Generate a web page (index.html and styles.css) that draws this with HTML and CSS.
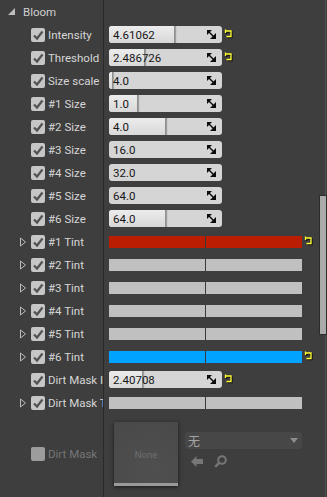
FILE: index.html
```html
<!DOCTYPE html>
<html lang="en">
<head>
    <meta charset="UTF-8">
    <title>Bloom</title>
    <link rel="stylesheet" href="styles.css">
</head>
<body>
    <div class="panel">
        <div class="row head">
            <div class="name">
                <svg class="collapse" width="7" height="7" viewBox="0 0 7 7"><polygon points="7,0 7,7 0,7" fill="#bdbdbd"/></svg>
                <span class="title">Bloom</span>
            </div>
            <div class="value"></div>
        </div>

        <div class="row">
            <div class="name"><span class="exp"></span><span class="cb"><svg viewBox="0 0 14 14"><path d="M3 7.5 L6 10.5 L11.5 3.5"/></svg></span><span class="label">Intensity</span></div>
            <div class="value"><div class="field"><span class="fill" style="width:65px"></span><span class="num">4.61062</span><svg class="spin" viewBox="0 0 9 9"><polygon points="0,0 5,0 0,5"/><polygon points="9,3 9,9 3,9"/><polygon points="1,2 2,1 8,7 7,8"/></svg></div><svg class="reset" viewBox="0 0 9 9"><path d="M1.5 0.5 V4 M1.5 2 H7 V7.5 H2.5"/></svg></div>
        </div>
        <div class="row">
            <div class="name"><span class="exp"></span><span class="cb"><svg viewBox="0 0 14 14"><path d="M3 7.5 L6 10.5 L11.5 3.5"/></svg></span><span class="label">Threshold</span></div>
            <div class="value"><div class="field"><span class="fill" style="width:35px"></span><span class="num">2.486726</span><svg class="spin" viewBox="0 0 9 9"><polygon points="0,0 5,0 0,5"/><polygon points="9,3 9,9 3,9"/><polygon points="1,2 2,1 8,7 7,8"/></svg></div><svg class="reset" viewBox="0 0 9 9"><path d="M1.5 0.5 V4 M1.5 2 H7 V7.5 H2.5"/></svg></div>
        </div>
        <div class="row">
            <div class="name"><span class="exp"></span><span class="cb"><svg viewBox="0 0 14 14"><path d="M3 7.5 L6 10.5 L11.5 3.5"/></svg></span><span class="label">Size scale</span></div>
            <div class="value"><div class="field"><span class="fill" style="width:3px"></span><span class="num">4.0</span><svg class="spin" viewBox="0 0 9 9"><polygon points="0,0 5,0 0,5"/><polygon points="9,3 9,9 3,9"/><polygon points="1,2 2,1 8,7 7,8"/></svg></div></div>
        </div>
        <div class="row">
            <div class="name"><span class="exp"></span><span class="cb"><svg viewBox="0 0 14 14"><path d="M3 7.5 L6 10.5 L11.5 3.5"/></svg></span><span class="label">#1 Size</span></div>
            <div class="value"><div class="field"><span class="fill" style="width:28px"></span><span class="num">1.0</span><svg class="spin" viewBox="0 0 9 9"><polygon points="0,0 5,0 0,5"/><polygon points="9,3 9,9 3,9"/><polygon points="1,2 2,1 8,7 7,8"/></svg></div></div>
        </div>
        <div class="row">
            <div class="name"><span class="exp"></span><span class="cb"><svg viewBox="0 0 14 14"><path d="M3 7.5 L6 10.5 L11.5 3.5"/></svg></span><span class="label">#2 Size</span></div>
            <div class="value"><div class="field"><span class="fill" style="width:56px"></span><span class="num">4.0</span><svg class="spin" viewBox="0 0 9 9"><polygon points="0,0 5,0 0,5"/><polygon points="9,3 9,9 3,9"/><polygon points="1,2 2,1 8,7 7,8"/></svg></div></div>
        </div>
        <div class="row">
            <div class="name"><span class="exp"></span><span class="cb"><svg viewBox="0 0 14 14"><path d="M3 7.5 L6 10.5 L11.5 3.5"/></svg></span><span class="label">#3 Size</span></div>
            <div class="value"><div class="field"><span class="num">16.0</span><svg class="spin" viewBox="0 0 9 9"><polygon points="0,0 5,0 0,5"/><polygon points="9,3 9,9 3,9"/><polygon points="1,2 2,1 8,7 7,8"/></svg></div></div>
        </div>
        <div class="row">
            <div class="name"><span class="exp"></span><span class="cb"><svg viewBox="0 0 14 14"><path d="M3 7.5 L6 10.5 L11.5 3.5"/></svg></span><span class="label">#4 Size</span></div>
            <div class="value"><div class="field"><span class="num">32.0</span><svg class="spin" viewBox="0 0 9 9"><polygon points="0,0 5,0 0,5"/><polygon points="9,3 9,9 3,9"/><polygon points="1,2 2,1 8,7 7,8"/></svg></div></div>
        </div>
        <div class="row">
            <div class="name"><span class="exp"></span><span class="cb"><svg viewBox="0 0 14 14"><path d="M3 7.5 L6 10.5 L11.5 3.5"/></svg></span><span class="label">#5 Size</span></div>
            <div class="value"><div class="field"><span class="num">64.0</span><svg class="spin" viewBox="0 0 9 9"><polygon points="0,0 5,0 0,5"/><polygon points="9,3 9,9 3,9"/><polygon points="1,2 2,1 8,7 7,8"/></svg></div></div>
        </div>
        <div class="row">
            <div class="name"><span class="exp"></span><span class="cb"><svg viewBox="0 0 14 14"><path d="M3 7.5 L6 10.5 L11.5 3.5"/></svg></span><span class="label">#6 Size</span></div>
            <div class="value"><div class="field"><span class="fill" style="width:56px"></span><span class="num">64.0</span><svg class="spin" viewBox="0 0 9 9"><polygon points="0,0 5,0 0,5"/><polygon points="9,3 9,9 3,9"/><polygon points="1,2 2,1 8,7 7,8"/></svg></div></div>
        </div>

        <div class="row">
            <div class="name"><svg class="exp" viewBox="0 0 12 10"><polygon points="1.5,1 6.5,5 1.5,9"/></svg><span class="cb"><svg viewBox="0 0 14 14"><path d="M3 7.5 L6 10.5 L11.5 3.5"/></svg></span><span class="label">#1 Tint</span></div>
            <div class="value"><div class="color red"></div><svg class="reset" viewBox="0 0 9 9"><path d="M1.5 0.5 V4 M1.5 2 H7 V7.5 H2.5"/></svg></div>
        </div>
        <div class="row">
            <div class="name"><svg class="exp" viewBox="0 0 12 10"><polygon points="1.5,1 6.5,5 1.5,9"/></svg><span class="cb"><svg viewBox="0 0 14 14"><path d="M3 7.5 L6 10.5 L11.5 3.5"/></svg></span><span class="label">#2 Tint</span></div>
            <div class="value"><div class="color"></div></div>
        </div>
        <div class="row">
            <div class="name"><svg class="exp" viewBox="0 0 12 10"><polygon points="1.5,1 6.5,5 1.5,9"/></svg><span class="cb"><svg viewBox="0 0 14 14"><path d="M3 7.5 L6 10.5 L11.5 3.5"/></svg></span><span class="label">#3 Tint</span></div>
            <div class="value"><div class="color"></div></div>
        </div>
        <div class="row">
            <div class="name"><svg class="exp" viewBox="0 0 12 10"><polygon points="1.5,1 6.5,5 1.5,9"/></svg><span class="cb"><svg viewBox="0 0 14 14"><path d="M3 7.5 L6 10.5 L11.5 3.5"/></svg></span><span class="label">#4 Tint</span></div>
            <div class="value"><div class="color"></div></div>
        </div>
        <div class="row">
            <div class="name"><svg class="exp" viewBox="0 0 12 10"><polygon points="1.5,1 6.5,5 1.5,9"/></svg><span class="cb"><svg viewBox="0 0 14 14"><path d="M3 7.5 L6 10.5 L11.5 3.5"/></svg></span><span class="label">#5 Tint</span></div>
            <div class="value"><div class="color"></div></div>
        </div>
        <div class="row">
            <div class="name"><svg class="exp" viewBox="0 0 12 10"><polygon points="1.5,1 6.5,5 1.5,9"/></svg><span class="cb"><svg viewBox="0 0 14 14"><path d="M3 7.5 L6 10.5 L11.5 3.5"/></svg></span><span class="label">#6 Tint</span></div>
            <div class="value"><div class="color blue"></div><svg class="reset" viewBox="0 0 9 9"><path d="M1.5 0.5 V4 M1.5 2 H7 V7.5 H2.5"/></svg></div>
        </div>

        <div class="row">
            <div class="name"><span class="exp"></span><span class="cb"><svg viewBox="0 0 14 14"><path d="M3 7.5 L6 10.5 L11.5 3.5"/></svg></span><span class="label">Dirt Mask Intensity</span></div>
            <div class="value"><div class="field"><span class="fill" style="width:33px"></span><span class="num">2.40708</span><svg class="spin" viewBox="0 0 9 9"><polygon points="0,0 5,0 0,5"/><polygon points="9,3 9,9 3,9"/><polygon points="1,2 2,1 8,7 7,8"/></svg></div><svg class="reset" viewBox="0 0 9 9"><path d="M1.5 0.5 V4 M1.5 2 H7 V7.5 H2.5"/></svg></div>
        </div>
        <div class="row">
            <div class="name"><svg class="exp" viewBox="0 0 12 10"><polygon points="1.5,1 6.5,5 1.5,9"/></svg><span class="cb"><svg viewBox="0 0 14 14"><path d="M3 7.5 L6 10.5 L11.5 3.5"/></svg></span><span class="label">Dirt Mask Tint</span></div>
            <div class="value"><div class="color"></div></div>
        </div>

        <div class="row asset">
            <div class="name"><span class="exp"></span><span class="cb off"></span><span class="label dim">Dirt Mask</span></div>
            <div class="value">
                <div class="thumb"><span>None</span></div>
                <div class="picker">
                    <div class="combo"><span>无</span><svg width="8" height="5" viewBox="0 0 8 5"><polygon points="0,0 8,0 4,5" fill="#8c8c8c"/></svg></div>
                    <div class="tools">
                        <svg width="12" height="11" viewBox="0 0 12 11"><polygon points="0,5.5 5.5,0 5.5,3 12,3 12,8 5.5,8 5.5,11" fill="#767676"/></svg>
                        <svg width="13" height="13" viewBox="0 0 13 13"><circle cx="8" cy="5" r="3.8" fill="none" stroke="#767676" stroke-width="2"/><path d="M5.3 7.7 L1.2 11.8" stroke="#767676" stroke-width="2.4"/></svg>
                    </div>
                </div>
            </div>
        </div>

        <div class="scrollbar"><div class="thumbbar"></div></div>
    </div>
</body>
</html>
```

FILE: styles.css
```css
body {
    margin: 0;
    background: #3e3e3e;
    font-family: Roboto, "Noto Sans CJK SC", sans-serif;
    font-size: 11px;
}
.panel {
    position: relative;
    width: 327px;
    height: 497px;
    background: #3e3e3e;
    overflow: hidden;
}
.row {
    display: flex;
    height: 23px;
}
.name {
    width: 104px;
    flex: none;
    display: flex;
    align-items: center;
    padding-left: 19px;
    box-sizing: border-box;
    border-right: 1px solid #2a2a2a;
    overflow: hidden;
    white-space: nowrap;
}
.head .name {
    padding-left: 8px;
}
.collapse {
    margin-right: 8px;
    margin-top: -1px;
}
.title {
    color: #cfcfcf;
    font-size: 11.5px;
}
.exp {
    width: 12px;
    height: 10px;
    flex: none;
}
svg.exp polygon {
    fill: none;
    stroke: #bcbcbc;
    stroke-width: 1;
}
.cb {
    width: 14px;
    height: 14px;
    flex: none;
    background: #c6c6c6;
    border-radius: 2px;
    display: flex;
}
.cb svg {
    width: 14px;
    height: 14px;
}
.cb path {
    fill: none;
    stroke: #525252;
    stroke-width: 2.2;
}
.cb.off {
    background: #9c9c9c;
}
.label {
    margin-left: 3px;
    color: #d6d6d6;
    font-size: 11.5px;
}
.label.dim {
    color: #767676;
}
.value {
    flex: 1;
    display: flex;
    align-items: center;
    padding-left: 5px;
}
.field {
    position: relative;
    width: 113px;
    height: 17px;
    background: #d5d5d5;
    border-radius: 3px;
    overflow: hidden;
    display: flex;
    align-items: center;
}
.fill {
    position: absolute;
    left: 0;
    top: 0;
    bottom: 0;
    background: linear-gradient(#ececec, #d8d8d8);
    border-right: 1px solid #8f8f8f;
    box-shadow: 1px 0 1px rgba(0,0,0,0.25);
}
.num {
    position: relative;
    padding-left: 4px;
    color: #161616;
    font-size: 11.5px;
    flex: 1;
}
.spin {
    position: relative;
    width: 9px;
    height: 9px;
    margin-right: 6px;
    fill: #0c0c0c;
}
.reset {
    width: 9px;
    height: 9px;
    margin-left: 2px;
    margin-top: -2px;
    filter: drop-shadow(1px 1px 0 #111);
}
.reset path {
    fill: none;
    stroke: #ffff33;
    stroke-width: 1.3;
}
.color {
    width: 193px;
    height: 12px;
    background: linear-gradient(to right, transparent 96px, #3a3a3a 96px, #3a3a3a 97px, transparent 97px), #c0c0c0;
}
.color.red {
    background-color: #bb1d00;
}
.color.blue {
    background-color: #00a3ff;
}
.row.asset {
    height: 83px;
}
.asset .name {
    padding-bottom: 3px;
}
.asset .value {
    padding-left: 10px;
    align-items: flex-start;
    padding-top: 8px;
}
.thumb {
    width: 64px;
    height: 64px;
    box-sizing: border-box;
    background: radial-gradient(circle at 60% 80%, #4f4f4f, #494949);
    border-bottom: 3px solid #9a9a9a;
    box-shadow: 0 1px 4px rgba(0,0,0,0.6);
    display: flex;
    align-items: center;
    justify-content: center;
}
.thumb span {
    color: #6f6f6f;
    font-size: 9.5px;
    margin-top: 3px;
}
.picker {
    margin-left: 7px;
    padding-top: 10px;
}
.combo {
    width: 117px;
    height: 17px;
    box-sizing: border-box;
    background: #474747;
    border-radius: 3px;
    display: flex;
    align-items: center;
    justify-content: space-between;
    padding: 0 4px 0 3px;
    color: #a3a3a3;
    font-size: 12px;
}
.tools {
    display: flex;
    align-items: center;
    gap: 11px;
    padding: 6px 0 0 6px;
}
.scrollbar {
    position: absolute;
    right: 0;
    top: 0;
    bottom: 0;
    width: 8px;
}
.scrollbar::before {
    content: "";
    position: absolute;
    left: 6px;
    top: 0;
    bottom: 0;
    width: 1px;
    background: #505050;
}
.thumbbar {
    position: absolute;
    left: 0;
    top: 195px;
    width: 8px;
    height: 140px;
    box-sizing: border-box;
    background: #aaaaaa;
    border: 1px solid #2c2c2c;
}
```
